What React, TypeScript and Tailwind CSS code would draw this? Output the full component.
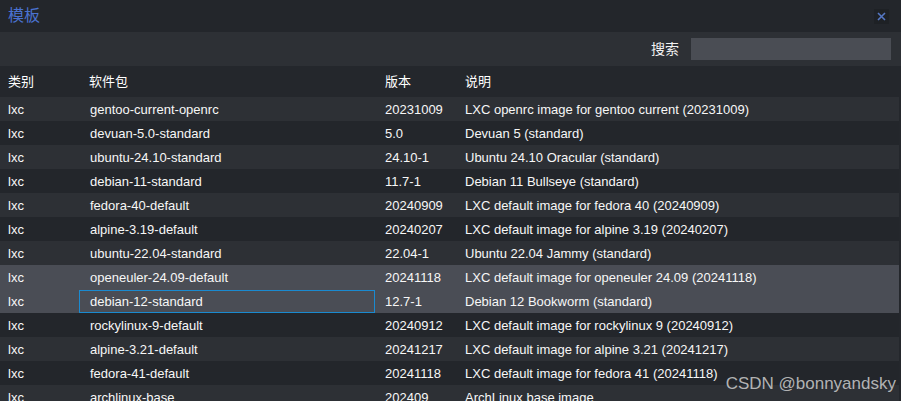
import React from "react";

interface Template {
  type: string;
  name: string;
  version: string;
  desc: string;
}

const ROWS: Template[] = [
  { type: "lxc", name: "gentoo-current-openrc", version: "20231009", desc: "LXC openrc image for gentoo current (20231009)" },
  { type: "lxc", name: "devuan-5.0-standard", version: "5.0", desc: "Devuan 5 (standard)" },
  { type: "lxc", name: "ubuntu-24.10-standard", version: "24.10-1", desc: "Ubuntu 24.10 Oracular (standard)" },
  { type: "lxc", name: "debian-11-standard", version: "11.7-1", desc: "Debian 11 Bullseye (standard)" },
  { type: "lxc", name: "fedora-40-default", version: "20240909", desc: "LXC default image for fedora 40 (20240909)" },
  { type: "lxc", name: "alpine-3.19-default", version: "20240207", desc: "LXC default image for alpine 3.19 (20240207)" },
  { type: "lxc", name: "ubuntu-22.04-standard", version: "22.04-1", desc: "Ubuntu 22.04 Jammy (standard)" },
  { type: "lxc", name: "openeuler-24.09-default", version: "20241118", desc: "LXC default image for openeuler 24.09 (20241118)" },
  { type: "lxc", name: "debian-12-standard", version: "12.7-1", desc: "Debian 12 Bookworm (standard)" },
  { type: "lxc", name: "rockylinux-9-default", version: "20240912", desc: "LXC default image for rockylinux 9 (20240912)" },
  { type: "lxc", name: "alpine-3.21-default", version: "20241217", desc: "LXC default image for alpine 3.21 (20241217)" },
  { type: "lxc", name: "fedora-41-default", version: "20241118", desc: "LXC default image for fedora 41 (20241118)" },
  { type: "lxc", name: "archlinux-base", version: "202409", desc: "ArchLinux base image" },
];

const SELECTED = [7, 8];
const FOCUSED = 8;

const font = { fontFamily: '"Liberation Sans", Arial, "Noto Sans CJK SC", sans-serif' };

export default function App() {
  return (
    <div className="relative w-[901px] h-[401px] overflow-hidden bg-[#24272c] text-[13px] text-[#f7f7f7]" style={font}>
      {/* Title bar */}
      <div className="h-[32px] flex items-center justify-between pl-2 pr-[12px] bg-[#23262b]">
        <span className="text-[16px] text-[#4a72d0]">模板</span>
        <button className="w-[15px] h-[15px] flex items-center justify-center bg-[#1e2125]">
          <svg width="9" height="9" viewBox="0 0 9 9">
            <path d="M1 1L8 8M8 1L1 8" stroke="#5577c4" strokeWidth="1.6" />
          </svg>
        </button>
      </div>

      {/* Toolbar */}
      <div className="h-[34px] flex items-center justify-end gap-3 pr-[10px] bg-[#2d3035]">
        <span className="text-[14px] text-[#f2f2f2]">搜索</span>
        <input className="w-[200px] h-[22px] bg-[#4a4d54] outline-none" />
      </div>

      {/* Header */}
      <div className="h-[31px] flex items-center pt-[1px] text-white mr-[2px]">
        <div className="w-[79px] pl-2">类别</div>
        <div className="w-[296px] pl-[10px]">软件包</div>
        <div className="w-[80px] pl-[10px]">版本</div>
        <div className="flex-1 pl-[10px]">说明</div>
      </div>

      {/* Rows */}
      <div className="mr-[2px]">
        {ROWS.map((r, i) => {
          const selected = SELECTED.includes(i);
          const bg = selected ? "bg-[#4a4d55]" : i % 2 === 0 ? "bg-[#2d3035]" : "bg-[#23262b]";
          return (
            <div key={r.name} className={`h-[24px] flex items-center pt-[1px] ${bg}`}>
              <div className="w-[79px] pl-2">{r.type}</div>
              <div
                className={`w-[296px] h-full flex items-center pl-[10px] border ${
                  i === FOCUSED ? "border-[#1a8ad0]" : "border-transparent"
                }`}
              >
                {r.name}
              </div>
              <div className="w-[80px] pl-[10px]">{r.version}</div>
              <div className="flex-1 pl-[10px] whitespace-nowrap">{r.desc}</div>
            </div>
          );
        })}
      </div>

      {/* Watermark */}
      <div className="absolute right-[5px] bottom-[5px] text-[17px] text-[#d8d8d8]/80">CSDN @bonnyandsky</div>
    </div>
  );
}
